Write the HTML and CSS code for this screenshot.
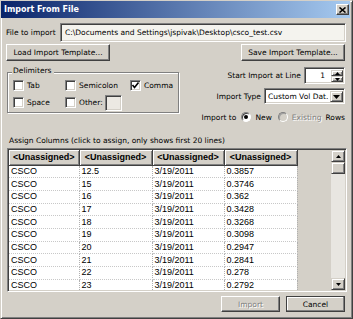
FILE: index.html
```html
<!DOCTYPE html>
<html>
<head>
<meta charset="utf-8">
<link rel="stylesheet" href="styles.css">
</head>
<body>
<div class="window">
  <div class="titlebar">
    <span class="title">Import From File</span>
    <span class="close"><svg width="7" height="6" viewBox="0 0 7 6"><path d="M0.5 0.5 L6.5 5.5 M6.5 0.5 L0.5 5.5" stroke="#000" stroke-width="1.6" fill="none"/></svg></span>
  </div>
  <div class="content">
    <div class="file-row">
      <span class="file-label">File to import</span>
      <div class="field path">C:\Documents and Settings\jspivak\Desktop\csco_test.csv</div>
    </div>
    <div class="btn-row">
      <div class="btn tmpl">Load Import Template...</div>
      <div class="btn tmpl">Save Import Template...</div>
    </div>
    <div class="mid">
      <div class="group">
        <span class="legend">Delimiters</span>
        <div class="group-box">
          <div class="chk-grid">
            <div class="chk"><span class="box"></span>Tab</div>
            <div class="chk"><span class="box"></span>Semicolon</div>
            <div class="chk"><span class="box"><svg width="9" height="9" viewBox="0 0 9 9"><path d="M1.5 4 L3.5 6.5 L7.5 1.5" stroke="#000" stroke-width="1.6" fill="none"/></svg></span>Comma</div>
            <div class="chk"><span class="box"></span>Space</div>
            <div class="chk other"><span class="box"></span>Other:<span class="other-field"></span></div>
          </div>
        </div>
      </div>
      <div class="opts">
        <div class="opt-row start-row">
          <span>Start Import at Line</span>
          <div class="spin">
            <span class="spin-val">1</span>
            <span class="spin-btns">
              <span class="spin-btn"><svg width="5" height="3" viewBox="0 0 5 3"><path d="M2.5 0 L5 3 L0 3 Z" fill="#000"/></svg></span>
              <span class="spin-btn"><svg width="5" height="3" viewBox="0 0 5 3"><path d="M0 0 L5 0 L2.5 3 Z" fill="#000"/></svg></span>
            </span>
          </div>
        </div>
        <div class="opt-row type-row">
          <span>Import Type</span>
          <div class="combo">
            <span class="combo-val">Custom Vol Dat.</span>
            <span class="combo-btn"><svg width="7" height="4" viewBox="0 0 7 4"><path d="M0 0 L7 0 L3.5 4 Z" fill="#000"/></svg></span>
          </div>
        </div>
        <div class="opt-row radio-row">
          <span>Import to</span>
          <span class="radio on"><span class="dot"></span></span>
          <span>New</span>
          <span class="radio dis"></span>
          <span class="disabled-text">Existing</span>
          <span>Rows</span>
        </div>
      </div>
    </div>
    <div class="assign">Assign Columns (click to assign, only shows first 20 lines)</div>
    <div class="list">
      <div class="list-main">
        <table class="grid">
          <thead>
            <tr><th>&lt;Unassigned&gt;</th><th>&lt;Unassigned&gt;</th><th>&lt;Unassigned&gt;</th><th>&lt;Unassigned&gt;</th></tr>
          </thead>
          <tbody>
            <tr><td>CSCO</td><td>12.5</td><td>3/19/2011</td><td>0.3857</td></tr>
            <tr><td>CSCO</td><td>15</td><td>3/19/2011</td><td>0.3746</td></tr>
            <tr><td>CSCO</td><td>16</td><td>3/19/2011</td><td>0.362</td></tr>
            <tr><td>CSCO</td><td>17</td><td>3/19/2011</td><td>0.3428</td></tr>
            <tr><td>CSCO</td><td>18</td><td>3/19/2011</td><td>0.3268</td></tr>
            <tr><td>CSCO</td><td>19</td><td>3/19/2011</td><td>0.3098</td></tr>
            <tr><td>CSCO</td><td>20</td><td>3/19/2011</td><td>0.2947</td></tr>
            <tr><td>CSCO</td><td>21</td><td>3/19/2011</td><td>0.2841</td></tr>
            <tr><td>CSCO</td><td>22</td><td>3/19/2011</td><td>0.278</td></tr>
            <tr><td>CSCO</td><td>23</td><td>3/19/2011</td><td>0.2792</td></tr>
          </tbody>
        </table>
      </div>
      <div class="vscroll">
        <span class="sb-btn"><svg width="5" height="3" viewBox="0 0 5 3"><path d="M2.5 0 L5 3 L0 3 Z" fill="#000"/></svg></span>
        <span class="sb-thumb"></span>
        <span class="sb-track"></span>
        <span class="sb-btn"><svg width="5" height="3" viewBox="0 0 5 3"><path d="M0 0 L5 0 L2.5 3 Z" fill="#000"/></svg></span>
      </div>
    </div>
    <div class="footer">
      <div class="btn foot disabled">Import</div>
      <div class="btn foot default">Cancel</div>
    </div>
  </div>
</div>
</body>
</html>
```

FILE: styles.css
```css
* { box-sizing: border-box; }
body {
  margin: 0;
  font-family: "DejaVu Sans", sans-serif;
  font-size: 7.5px;
  color: #000;
  background: #D4D0C8;
}
.window {
  width: 353px;
  height: 319px;
  background: #D4D0C8;
  border: 1px solid;
  border-color: #D4D0C8 #404040 #404040 #D4D0C8;
  box-shadow: inset 1px 1px #fff, inset -1px -1px #808080;
  padding: 0 2px 2px 0;
  display: flex;
  flex-direction: column;
}
.titlebar {
  height: 17px;
  flex: none;
  background: linear-gradient(to right, #0A246A, #A6CAF0);
  display: flex;
  align-items: center;
  justify-content: space-between;
  padding: 0 1px 0 3px;
}
.title {
  color: #fff;
  font-weight: bold;
  font-size: 8px;
}
.close {
  width: 13px;
  height: 11px;
  background: #D4D0C8;
  border: 1px solid;
  border-color: #fff #404040 #404040 #fff;
  box-shadow: inset -1px -1px #808080;
  display: flex;
  align-items: center;
  justify-content: center;
}
.content {
  flex: 1;
  display: flex;
  flex-direction: column;
  padding: 0 3px 0 5px;
}
.file-row {
  margin-top: 5px;
  height: 19px;
  display: flex;
  align-items: center;
}
.file-label { width: 54px; }
.field {
  background: #F4F3EE;
  border: 1px solid;
  border-color: #808080 #fff #fff #808080;
  box-shadow: inset 1px 1px #404040, inset -1px -1px #D4D0C8;
}
.path {
  flex: 1;
  height: 19px;
  line-height: 17px;
  padding-left: 4px;
  margin-right: 1px;
  white-space: nowrap;
  overflow: hidden;
}
.btn {
  background: #D4D0C8;
  border: 1px solid;
  border-color: #fff #404040 #404040 #fff;
  box-shadow: inset -1px -1px #808080;
  display: flex;
  align-items: center;
  justify-content: center;
}
.btn-row {
  margin-top: 2px;
  height: 17px;
  display: flex;
  justify-content: space-between;
  padding-right: 2px;
}
.tmpl { width: 104px; }
.mid {
  margin-top: 5px;
  height: 48px;
  display: flex;
  justify-content: space-between;
}
.group {
  width: 172px;
  margin-left: 1px;
  display: flex;
  flex-direction: column;
}
.legend {
  align-self: flex-start;
  position: relative;
  z-index: 1;
  background: #D4D0C8;
  margin-left: 5px;
  padding: 0 2px 0 1px;
  line-height: 10px;
  margin-bottom: -4px;
}
.group-box {
  height: 41px;
  border: 1px solid #808080;
  box-shadow: inset 1px 1px #fff, 1px 1px #fff;
  padding: 7px 0 0 5px;
}
.chk-grid {
  display: grid;
  grid-template-columns: 52px 65px 40px;
  row-gap: 6px;
}
.chk {
  display: flex;
  align-items: center;
  height: 11px;
}
.box {
  width: 11px;
  height: 11px;
  background: #fff;
  border: 1px solid;
  border-color: #808080 #fff #fff #808080;
  box-shadow: inset 1px 1px #404040, inset -1px -1px #D4D0C8;
  margin-right: 3px;
  display: flex;
  align-items: center;
  justify-content: center;
  flex: none;
}
.other-field {
  width: 17px;
  height: 16px;
  margin-left: 2px;
  background: #ECE9E3;
  border: 1px solid;
  border-color: #808080 #fff #fff #808080;
  box-shadow: inset 1px 1px #404040, inset -1px -1px #D4D0C8;
}
.opts {
  display: flex;
  flex-direction: column;
  align-items: flex-end;
  padding-right: 2px;
}
.opt-row {
  display: flex;
  align-items: center;
}
.start-row { height: 17px; margin-top: 1px; }
.spin {
  width: 41px;
  height: 17px;
  margin-left: 3px;
  background: #fff;
  border: 1px solid;
  border-color: #808080 #fff #fff #808080;
  box-shadow: inset 1px 1px #404040, inset -1px -1px #D4D0C8;
  display: flex;
  align-items: stretch;
  padding: 2px 1px 1px 2px;
}
.spin-val {
  flex: 1;
  text-align: right;
  padding-right: 6px;
  line-height: 12px;
}
.spin-btns {
  width: 12px;
  display: flex;
  flex-direction: column;
}
.spin-btn {
  flex: 1;
  background: #D4D0C8;
  border: 1px solid;
  border-color: #D4D0C8 #404040 #404040 #D4D0C8;
  box-shadow: inset 1px 1px #fff, inset -1px -1px #808080;
  display: flex;
  align-items: center;
  justify-content: center;
}
.type-row { height: 16px; margin-top: 4px; }
.combo {
  width: 81px;
  height: 16px;
  margin-left: 3px;
  background: #fff;
  border: 1px solid;
  border-color: #808080 #fff #fff #808080;
  box-shadow: inset 1px 1px #404040, inset -1px -1px #D4D0C8;
  display: flex;
  padding: 2px 1px 1px 3px;
}
.combo-val {
  flex: 1;
  line-height: 11px;
  white-space: nowrap;
  overflow: hidden;
}
.combo-btn {
  width: 13px;
  background: #D4D0C8;
  border: 1px solid;
  border-color: #D4D0C8 #404040 #404040 #D4D0C8;
  box-shadow: inset 1px 1px #fff, inset -1px -1px #808080;
  display: flex;
  align-items: center;
  justify-content: center;
}
.radio-row { height: 10px; margin-top: 8px; }
.radio {
  width: 10px;
  height: 10px;
  border-radius: 50%;
  border: 1px solid;
  border-color: #808080 #fff #fff #808080;
  box-shadow: inset 1px 1px #404040;
  background: #fff;
  margin: 0 4px 0 5px;
  display: flex;
  align-items: center;
  justify-content: center;
}
.radio.dis { background: #D4D0C8; margin-left: 6px; box-shadow: inset 1px 1px #A0A0A0; }
.dot { width: 4px; height: 4px; border-radius: 50%; background: #000; }
.disabled-text { color: #808080; text-shadow: 1px 1px #fff; margin-right: 4px; }
.assign {
  margin-top: 22px;
  line-height: 10px;
  padding-left: 3px;
}
.list {
  margin-top: 2px;
  margin-left: 1px;
  height: 144px;
  display: flex;
  border: 1px solid;
  border-color: #808080 #fff #fff #808080;
  box-shadow: inset 1px 1px #404040, inset -1px -1px #D4D0C8;
  padding: 1px;
}
.list-main {
  flex: 1;
  background: #D4D0C8;
  overflow: hidden;
}
.grid {
  border-collapse: collapse;
  font-family: "Liberation Sans", Arial, sans-serif;
  font-size: 9px;
  table-layout: fixed;
  width: 288px;
}
.grid th {
  height: 15px;
  padding: 0;
  font-weight: bold;
  text-align: center;
  background: #D4D0C8;
  border-right: 1px solid #404040;
  border-bottom: 1px solid #404040;
  box-shadow: inset 1px 1px #fff, inset -1px -1px #808080;
}
.grid th:nth-child(1) { width: 70px; }
.grid th:nth-child(2) { width: 73px; }
.grid th:nth-child(3) { width: 72px; }
.grid th:nth-child(4) { width: 73px; }
.grid td {
  height: 12.7px;
  padding: 0 0 0 2px;
  background: #fff;
  border-right: 1px dotted #B0B0B0;
  border-bottom: 1px dotted #C8C8C8;
  line-height: 11px;
  white-space: nowrap;
}
.vscroll {
  width: 14px;
  display: flex;
  flex-direction: column;
  background: #E8E6E1;
}
.sb-btn, .sb-thumb {
  height: 12px;
  background: #D4D0C8;
  border: 1px solid;
  border-color: #D4D0C8 #404040 #404040 #D4D0C8;
  box-shadow: inset 1px 1px #fff, inset -1px -1px #808080;
  display: flex;
  align-items: center;
  justify-content: center;
  flex: none;
}
.sb-thumb { height: 12px; }
.sb-track { flex: 1; }
.footer {
  margin-top: 4px;
  height: 16px;
  display: flex;
  justify-content: flex-end;
  gap: 6px;
  padding-right: 2px;
}
.foot { width: 59px; }
.foot.disabled { color: #808080; text-shadow: 1px 1px #fff; }
.foot.default { outline: 1px solid #404040; outline-offset: -1px; border-color: #fff #404040 #404040 #fff; box-shadow: inset -1px -1px #808080, inset 1px 1px #fff; }
```
